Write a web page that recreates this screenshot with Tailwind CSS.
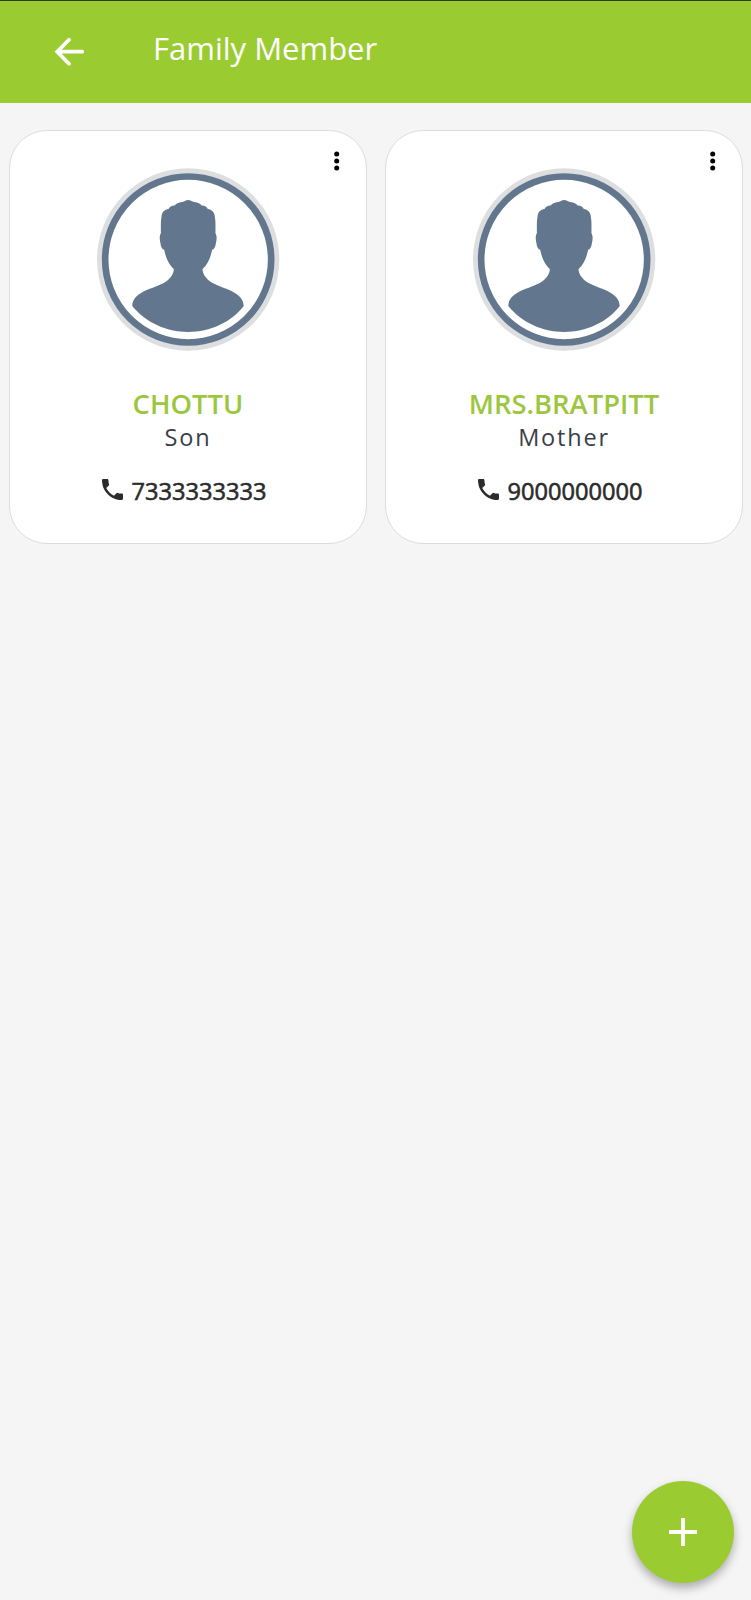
<!DOCTYPE html>
<html lang="en">
<head>
<meta charset="utf-8">
<title>Family Member</title>
<script src="https://cdn.jsdelivr.net/npm/@tailwindcss/browser@4"></script>
</head>
<body class="min-h-[1600px] bg-[#f5f5f5] font-['Open_Sans','Noto_Sans',sans-serif]">
<svg class="hidden">
  <symbol id="avatar" viewBox="0 0 550 550">
    <circle cx="274" cy="275" r="274" fill="#dcdee0"/>
    <circle cx="274" cy="275" r="249.500" fill="#fff" stroke="#62778e" stroke-width="20"/>
    <path fill="#62778e" d="M274 96C281 96 284 101 292 102 304 103 310 107 315 113 324 113 330 117 333 123 345 125 353 133 354 144 357 160 356 178 356 196 361 204 360 216 357 228 356 238 352 245 346 246 341 272 331 291 317 304 318 322 332 338 354 349 388 366 439 374 441 415 403 464 340 493 274 493S146 464 106 415C108 374 159 366 194 349 216 338 230 322 231 304 217 291 207 272 202 246 196 245 192 238 191 228 188 216 187 204 192 196 192 178 191 160 194 144 195 133 203 125 215 123 218 117 224 113 233 113 238 107 244 103 256 102 264 101 267 96 274 96Z"/>
  </symbol>
  <symbol id="phone" viewBox="3 3 18 18">
    <path d="M6.620 10.790c1.440 2.830 3.760 5.140 6.590 6.590l2.200-2.200c.27-.27.67-.36 1.020-.24 1.120.37 2.330.57 3.570.57.550 0 1 .45 1 1V20c0 .55-.45 1-1 1C10.610 21 3 13.390 3 4c0-.55.45-1 1-1h3.500c.55 0 1 .45 1 1 0 1.250.2 2.450.57 3.570.11.350.03.740-.25 1.020z"/>
  </symbol>
  <symbol id="dots" viewBox="0 0 6 20">
    <circle cx="2.700" cy="3" r="2.500"/><circle cx="2.700" cy="10" r="2.500"/><circle cx="2.700" cy="17" r="2.500"/>
  </symbol>
</svg>
<header class="flex h-[103px] items-start border-t border-[#2d3d0e] bg-[#9acc32] text-white">
  <button class="ml-[54px] mt-[36px]" aria-label="Back">
    <svg class="block h-[30px] w-[30px]" viewBox="0 0 30 30" fill="none" stroke="currentColor" stroke-width="3.700" stroke-linecap="round"><path d="M28.200 14.700H4M15 2.700L3.200 14.700 15 26.700"/></svg>
  </button>
  <h1 class="ml-[69px] mt-[23px] text-[31px] leading-[48px]">Family Member</h1>
</header>
<main class="grid grid-cols-2 gap-[18px] pl-[9px] pr-[8px] pt-[27px]">
  <section class="relative flex h-[414px] flex-col items-center rounded-[38px] border border-[#dcdcdc] bg-white pt-[37px]">
    <button class="absolute right-[26px] top-[20px]" aria-label="More"><svg class="block h-5 w-1.5"><use href="#dots"/></svg></button>
    <svg class="block h-[183px] w-[183px]"><use href="#avatar"/></svg>
    <h2 class="mt-[34px] text-[27.400px] leading-[38px] font-semibold text-[#9dc63f]">CHOTTU</h2>
    <p class="text-[23.500px] leading-[28px] tracking-[1.800px] text-[#3a3e46]">Son</p>
    <p class="mt-[23px] mr-[8px] flex items-center gap-[9px] text-[23.600px] leading-[34px] text-[#2c2c2c] [-webkit-text-stroke:0.6px_#2c2c2c]"><svg class="mb-1 h-[21px] w-[21px] fill-current"><use href="#phone"/></svg>7333333333</p>
  </section>
  <section class="relative flex h-[414px] flex-col items-center rounded-[38px] border border-[#dcdcdc] bg-white pt-[37px]">
    <button class="absolute right-[26px] top-[20px]" aria-label="More"><svg class="block h-5 w-1.5"><use href="#dots"/></svg></button>
    <svg class="block h-[183px] w-[183px]"><use href="#avatar"/></svg>
    <h2 class="mt-[34px] text-[27.400px] leading-[38px] font-semibold text-[#9dc63f]">MRS.BRATPITT</h2>
    <p class="text-[23.500px] leading-[28px] tracking-[1.800px] text-[#3a3e46]">Mother</p>
    <p class="mt-[23px] mr-[8px] flex items-center gap-[9px] text-[23.600px] leading-[34px] text-[#2c2c2c] [-webkit-text-stroke:0.6px_#2c2c2c]"><svg class="mb-1 h-[21px] w-[21px] fill-current"><use href="#phone"/></svg>9000000000</p>
  </section>
</main>
<button class="fixed bottom-[17px] right-[17px] flex h-[102px] w-[102px] items-center justify-center rounded-full bg-[#9acc32] shadow-[0_5px_10px_rgba(0,0,0,0.3)]" aria-label="Add">
  <svg class="h-7 w-7" viewBox="0 0 28 28" stroke="#fff" stroke-width="3.800"><path d="M14 0v28M0 14h28"/></svg>
</button>
</body>
</html>
